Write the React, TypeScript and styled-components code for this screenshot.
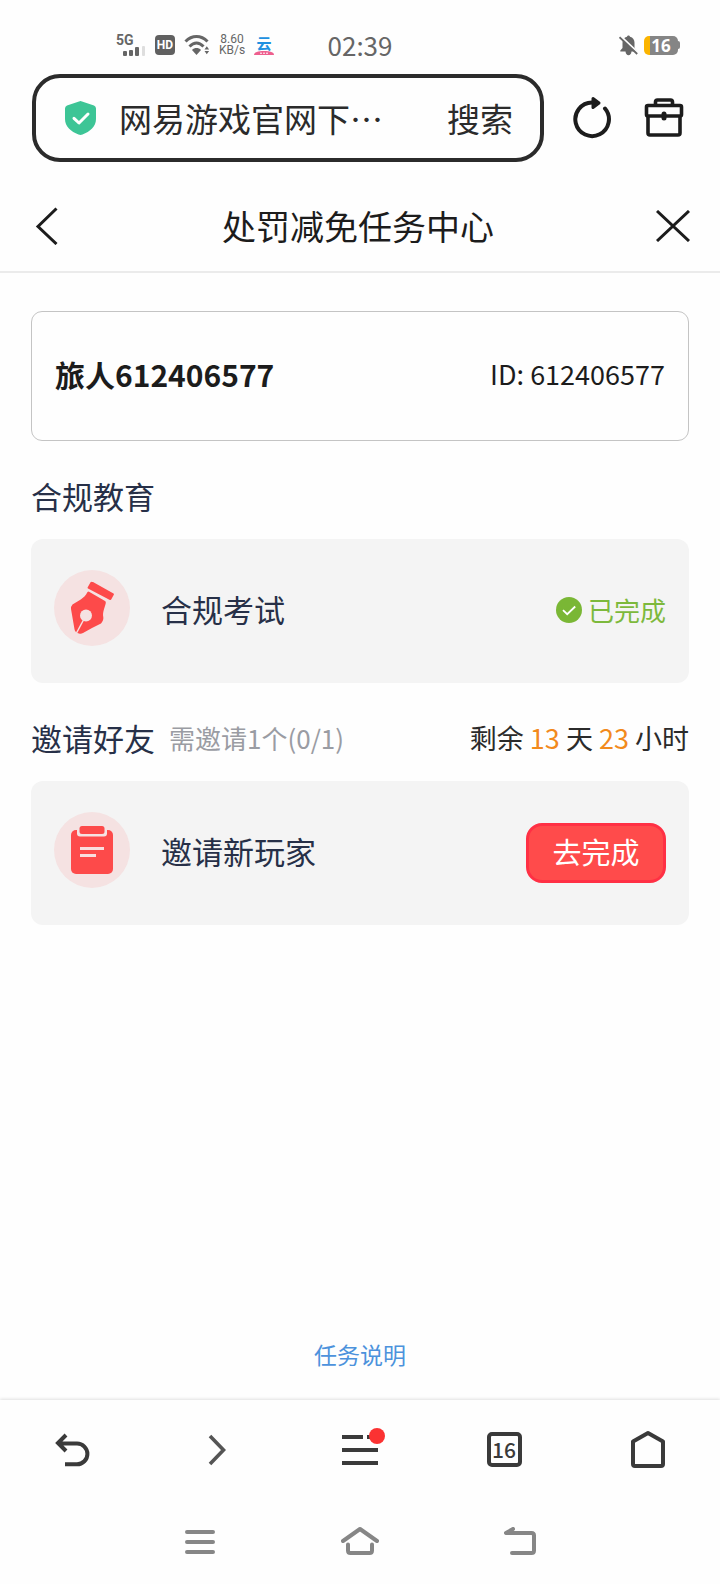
import React from "react";
import styled, { createGlobalStyle } from "styled-components";

const GlobalStyle = createGlobalStyle`
  *, *::before, *::after { box-sizing: border-box; }
  body {
    margin: 0;
    background: #fefefe;
    color: #1c1c1c;
    font-family: "Noto Sans CJK SC", "Noto Sans", sans-serif;
  }
  button, input { font-family: inherit; }
  svg { display: block; flex: none; }
`;

const Page = styled.div`
  display: flex;
  flex-direction: column;
  min-height: 100vh;
`;

/* Phone status bar */

const StatusBar = styled.div`
  display: grid;
  grid-template-columns: 1fr auto 1fr;
  align-items: center;
  height: 74px;
  padding: 16px 40px 0;
  color: #666;
`;

const StatusGroup = styled.div<{ $end?: boolean }>`
  display: flex;
  align-items: center;
  gap: ${(p) => (p.$end ? 6 : 9)}px;
  justify-content: ${(p) => (p.$end ? "flex-end" : "flex-start")};
  padding-left: ${(p) => (p.$end ? 0 : 76)}px;
`;

const Signal = styled.div`
  display: flex;
  flex-direction: column;
  width: 30px;
  height: 22px;
  font: 700 14px/12px Roboto, sans-serif;

  svg { align-self: flex-end; }
`;

const HdBadge = styled.span`
  width: 20px;
  height: 20px;
  border-radius: 4px;
  background: #606060;
  color: #fff;
  font: 700 12px/20px Roboto, sans-serif;
  text-align: center;
`;

const Speed = styled.span`
  width: 26px;
  font: 400 12px/11px Roboto, sans-serif;
  text-align: center;
`;

const CloudBadge = styled.span`
  display: flex;
  flex-direction: column;
  align-items: center;
  width: 20px;
  color: #2090e0;
  font-weight: 700;
  font-size: 15px;
  line-height: 15px;
`;

const Clock = styled.time`
  font: 400 26px/30px "Noto Sans CJK SC", sans-serif;
`;

const Battery = styled.span`
  display: flex;
  align-items: center;

  span {
    width: 34px;
    height: 19px;
    border-radius: 5px;
    background: linear-gradient(to right, #fbb400 6px, #858585 6px);
    color: #fff;
    font: 700 17px/19px "Open Sans", sans-serif;
    text-align: center;
  }

  &::after {
    content: "";
    width: 2px;
    height: 8px;
    border-radius: 0 2px 2px 0;
    background: #858585;
  }
`;

/* Browser address row */

const IconButton = styled.button`
  display: flex;
  align-items: center;
  justify-content: center;
  padding: 0;
  border: 0;
  background: none;
  color: inherit;
  cursor: pointer;
`;

const AddressRow = styled.form`
  display: flex;
  align-items: center;
  gap: 26px;
  padding: 0 36px 0 32px;
`;

const AddressBox = styled.div`
  display: flex;
  flex: 1;
  align-items: center;
  min-width: 0;
  height: 88px;
  padding: 0 27px 0 29px;
  border: 4px solid #2b2b2b;
  border-radius: 28px;
`;

const AddressInput = styled.input`
  flex: 1;
  min-width: 0;
  margin: 0 23px;
  padding: 0;
  border: 0;
  outline: 0;
  background: none;
  color: #2b2b2b;
  font-size: 33px;
  line-height: 48px;
`;

const SearchButton = styled.button`
  padding: 0;
  border: 0;
  background: none;
  color: #2b2b2b;
  font-size: 33px;
  line-height: 48px;
  cursor: pointer;
`;

const AddressActions = styled.div`
  display: flex;
  align-items: center;
  gap: 32px;
`;

/* Web page */

const TitleBar = styled.header`
  display: flex;
  align-items: center;
  justify-content: space-between;
  height: 111px;
  padding: 18px 30px 0 34px;
  border-bottom: 2px solid #ebebeb;
`;

const Title = styled.h1`
  margin: 0;
  font-weight: 400;
  font-size: 34px;
  line-height: 48px;
`;

const Content = styled.main`
  display: flex;
  flex: 1;
  flex-direction: column;
  padding: 38px 31px 26px;
`;

const PlayerCard = styled.section`
  display: flex;
  align-items: center;
  justify-content: space-between;
  height: 130px;
  padding: 0 23px 4px;
  border: 1px solid #c4c4c4;
  border-radius: 11px;
`;

const PlayerName = styled.strong`
  font-weight: 700;
  font-size: 30px;
  line-height: 40px;
`;

const PlayerId = styled.span`
  font-size: 27px;
  line-height: 40px;
`;

const SectionHead = styled.div`
  display: flex;
  align-items: center;
  height: 98px;
  padding-top: 11px;
`;

const SectionTitle = styled.h2`
  margin: 0;
  color: #273048;
  font-weight: 400;
  font-size: 31px;
  line-height: 40px;
`;

const Requirement = styled.span`
  margin-left: 14px;
  color: #9a9ca3;
  font-size: 26px;
  line-height: 40px;
`;

const Countdown = styled.span`
  margin-left: auto;
  color: #2b2b2b;
  font-size: 27px;
  line-height: 40px;

  b {
    color: #f28a1c;
    font-weight: 400;
  }
`;

const TaskCard = styled.section`
  display: flex;
  align-items: center;
  height: 144px;
  padding: 0 23px;
  border-radius: 12px;
  background: #f4f4f4;
`;

const TaskIcon = styled.span`
  align-self: flex-start;
  margin-top: 31px;
`;

const TaskName = styled.span`
  flex: 1;
  margin-left: 31px;
  padding-bottom: 4px;
  color: #273048;
  font-size: 31px;
  line-height: 40px;
`;

const Done = styled.span`
  display: flex;
  align-items: center;
  gap: 6px;
  padding-bottom: 2px;
  color: #7db93c;
  font-size: 26px;
  line-height: 40px;
`;

const GoButton = styled.button`
  width: 140px;
  height: 60px;
  padding: 0 0 4px;
  border: 3px solid #ff3044;
  border-radius: 16px;
  background: #ff4b4b;
  color: #fff;
  font-size: 29px;
  line-height: 40px;
  cursor: pointer;
`;

const HelpLink = styled.a`
  align-self: center;
  margin-top: auto;
  color: #4c92dc;
  font-size: 23px;
  line-height: 40px;
  text-decoration: none;
`;

/* Bottom bars */

const Toolbar = styled.nav`
  display: grid;
  grid-template-columns: repeat(5, 1fr);
  height: 99px;
  box-shadow: 0 -1px 3px rgba(0, 0, 0, 0.12);
  color: #3a3a3a;
`;

const MenuIcon = styled.span`
  position: relative;

  &::after {
    content: "";
    position: absolute;
    top: -4px;
    right: -7px;
    width: 16px;
    height: 16px;
    border-radius: 50%;
    background: #fb3232;
  }
`;

const TabCount = styled.span`
  width: 35px;
  height: 35px;
  border: 4px solid #3a3a3a;
  border-radius: 5px;
  font: 500 21px/26px "Noto Sans CJK SC", sans-serif;
  text-align: center;
`;

const SystemNav = styled.nav`
  position: relative;
  display: grid;
  grid-template-columns: repeat(3, 1fr);
  height: 85px;
  padding: 0 calc(100% / 6);
  background: #fefefe;
  color: #868686;
`;

const line = {
  fill: "none",
  stroke: "currentColor",
  strokeLinecap: "round" as const,
  strokeLinejoin: "round" as const,
};

export default function App() {
  return (
    <Page>
      <GlobalStyle />

      <StatusBar>
        <StatusGroup>
          <Signal>
            5G
            <svg width="24" height="10" fill="#666">
              <rect x="1" y="5" width="4" height="5" rx="1" />
              <rect x="7" y="4" width="4" height="6" rx="1" />
              <rect x="13" y="1" width="4" height="9" rx="1" />
              <rect x="20" y="0" width="3" height="10" rx="1" fill="#dedede" />
            </svg>
          </Signal>
          <HdBadge>HD</HdBadge>
          <svg width="26" height="22" viewBox="0 0 26 22" {...line} strokeWidth="3">
            <path d="M1.500 7.500C8 .8 17 .8 23.500 7.500" strokeLinecap="butt" />
            <path d="M5.500 12.500C10 8 15 8 19.500 12.500" strokeLinecap="butt" />
            <path d="M8 16c2.600-2.600 6.400-2.600 9 0L12.500 21z" fill="currentColor" stroke="none" />
            <path d="M20.500 15.500l2.300-3.200 2.300 3.200zM20.500 17h4.600L22.800 20.300z" fill="currentColor" stroke="none" />
          </svg>
          <Speed>8.60 KB/s</Speed>
          <CloudBadge>
            云
            <svg width="20" height="5" viewBox="0 0 20 5">
              <path d="M0 5C0 2 4 1 10 1S20 2 20 5z" fill="#ee5f8e" />
              <path d="M6 3.200h8" stroke="#fff" strokeWidth="1" strokeDasharray="2 1" />
            </svg>
          </CloudBadge>
        </StatusGroup>
        <Clock>02:39</Clock>
        <StatusGroup $end>
          <svg width="19" height="21" viewBox="0 0 19 21" fill="#666">
            <path d="M9.500 0.500c.9 0 1.400.6 1.500 1.300 3 .8 4.500 3 4.500 6V13l2.200 2.500v1H1.300v-1L3.500 13V7.800c0-3 1.500-5.200 4.500-6 .1-.7.600-1.300 1.500-1.300zM6.500 16.500h6c-.3 2.500-1.500 3.800-3 3.800s-2.700-1.300-3-3.800z" />
            <path d="M1.500 1L20 18.500" stroke="#fefefe" strokeWidth="2" />
            <path d="M0.500 2.200L18.200 19" stroke="#666" strokeWidth="1.800" />
          </svg>
          <Battery>
            <span>16</span>
          </Battery>
        </StatusGroup>
      </StatusBar>

      <AddressRow onSubmit={(e) => e.preventDefault()}>
        <AddressBox>
          <svg width="31" height="34" viewBox="0 0 31 34">
            <path d="M14 .4q1.500-.6 3 0L29 4.500q2 .8 2 3V18c0 7.500-6 12.500-13.500 15.600q-2 .7-4 0C6 30.500 0 25.500 0 18V7.500q0-2.200 2-3z" fill="#3dc596" />
            <path d="M9 17.300l5 4.700L23 13" fill="none" stroke="#fff" strokeWidth="3" strokeLinecap="round" strokeLinejoin="round" />
          </svg>
          <AddressInput type="text" aria-label="网址" defaultValue="网易游戏官网下…" />
          <SearchButton type="submit">搜索</SearchButton>
        </AddressBox>
        <AddressActions>
          <IconButton type="button" aria-label="刷新">
            <svg width="42" height="42" viewBox="0 0 42 42" {...line} stroke="#1c1c1c" strokeWidth="4">
              <path d="M35 11.500A16.800 16.800 0 1 1 22 5.500" />
              <path d="M23 1.500L29 6 23 10.500z" fill="#1c1c1c" strokeWidth="3" />
            </svg>
          </IconButton>
          <IconButton type="button" aria-label="工具箱">
            <svg width="40" height="42" viewBox="0 0 40 42" {...line} stroke="#1c1c1c" strokeWidth="4">
              <path d="M11.500 8V5q0-2 2-2h13q2 0 2 2v3" strokeWidth="3.600" />
              <path d="M4 8.500h32q1.500 0 1.500 1.500v7.500q0 1.500-1.500 1.500H4q-1.500 0-1.500-1.500V10Q2.500 8.500 4 8.500z" strokeWidth="3.600" />
              <path d="M4 20v16q0 2 2 2h28q2 0 2-2V20" strokeWidth="3.600" />
              <path d="M20 17v4" strokeWidth="5" />
            </svg>
          </IconButton>
        </AddressActions>
      </AddressRow>

      <TitleBar>
        <IconButton type="button" aria-label="返回">
          <svg width="26" height="38" viewBox="0 0 26 38" {...line} strokeWidth="3">
            <path d="M22.500 1.500L4 19.500l18.500 17.500" strokeLinecap="butt" strokeLinejoin="miter" />
          </svg>
        </IconButton>
        <Title>处罚减免任务中心</Title>
        <IconButton type="button" aria-label="关闭">
          <svg width="34" height="32" viewBox="0 0 34 32" {...line} strokeWidth="3">
            <path d="M1 1l32 30M33 1L1 31" strokeLinecap="butt" />
          </svg>
        </IconButton>
      </TitleBar>

      <Content>
        <PlayerCard>
          <PlayerName>旅人612406577</PlayerName>
          <PlayerId>ID: 612406577</PlayerId>
        </PlayerCard>

        <SectionHead>
          <SectionTitle>合规教育</SectionTitle>
        </SectionHead>
        <TaskCard>
          <TaskIcon>
            <svg width="76" height="76" viewBox="0 0 76 76">
              <circle cx="38" cy="38" r="38" fill="#f5e2e2" />
              <path d="M39 12l20.500 11.500q.8.500.3 1.300l-2.600 4.800q-.5.800-1.300.3L34 18.600q-.8-.5-.3-1.300l2.700-4.900q.6-.9 1.600-.4z" fill="#fd4a4a" />
              <path d="M33.500 22q1-.8 2 0L51 31q1 .6.800 2c-1 5-3.500 9-2.500 14 .3 2-.3 4.300-2.300 6.500-6 3-12 6-18 9.500q-2 1.200-4 .5-4-1-4.500-4.300L17 39q-.3-2.500 1.500-4.500C24 31 30 29 33.500 22z" fill="#fd4a4a" />
              <circle cx="32" cy="45.500" r="6" fill="#f5e2e2" />
              <path d="M30 49L22.500 63" stroke="#f5e2e2" strokeWidth="1.500" />
            </svg>
          </TaskIcon>
          <TaskName>合规考试</TaskName>
          <Done>
            <svg width="26" height="26" viewBox="0 0 26 26">
              <circle cx="13" cy="13" r="13" fill="#7ab735" />
              <path d="M7 13.200l4.200 4 8-7.700" fill="none" stroke="#fff" strokeWidth="1.800" />
            </svg>
            已完成
          </Done>
        </TaskCard>

        <SectionHead>
          <SectionTitle>邀请好友</SectionTitle>
          <Requirement>需邀请1个(0/1)</Requirement>
          <Countdown>
            剩余 <b>13</b> 天 <b>23</b> 小时
          </Countdown>
        </SectionHead>
        <TaskCard>
          <TaskIcon>
            <svg width="76" height="76" viewBox="0 0 76 76">
              <circle cx="38" cy="38" r="38" fill="#f5e2e2" />
              <rect x="17" y="18" width="42" height="44" rx="5" fill="#fd4a4a" />
              <path d="M23 17.500h30v4q0 3-3 3H26q-3 0-3-3z" fill="#f5e2e2" />
              <rect x="25.500" y="14" width="25" height="8" rx="2.500" fill="#fd4a4a" />
              <path d="M26 36.500h24M26 43.500h16" stroke="#f9dede" strokeWidth="2.800" />
            </svg>
          </TaskIcon>
          <TaskName>邀请新玩家</TaskName>
          <GoButton type="button">去完成</GoButton>
        </TaskCard>

        <HelpLink href="#help">任务说明</HelpLink>
      </Content>

      <Toolbar>
        <IconButton type="button" aria-label="后退">
          <svg width="36" height="34" viewBox="0 0 36 34" {...line} strokeWidth="4">
            <path d="M12 2L4 10l8 8M4 10.500h19a10.400 10.400 0 0 1 0 20.800H11" strokeLinecap="butt" strokeLinejoin="miter" />
          </svg>
        </IconButton>
        <IconButton type="button" aria-label="前进">
          <svg width="20" height="32" viewBox="0 0 20 32" {...line} stroke="#555" strokeWidth="3.600">
            <path d="M4 2l13.500 14L4 30" strokeLinecap="butt" strokeLinejoin="miter" />
          </svg>
        </IconButton>
        <IconButton type="button" aria-label="菜单">
          <MenuIcon>
            <svg width="36" height="36" viewBox="0 0 36 36" {...line} strokeWidth="4">
              <path d="M0 5h21M25 5h11M0 18h36M0 31h36" strokeLinecap="butt" />
            </svg>
          </MenuIcon>
        </IconButton>
        <IconButton type="button" aria-label="标签页">
          <TabCount>16</TabCount>
        </IconButton>
        <IconButton type="button" aria-label="主页">
          <svg width="36" height="40" viewBox="0 0 36 40" {...line} strokeWidth="4">
            <path d="M18 3L33 11.500V34q0 2-2 2H5q-2 0-2-2V11.500z" />
          </svg>
        </IconButton>
      </Toolbar>

      <SystemNav>
        <IconButton type="button" aria-label="最近任务">
          <svg width="30" height="26" viewBox="0 0 30 26" {...line} strokeWidth="4">
            <path d="M2 3h26M2 13h26M2 23h26" />
          </svg>
        </IconButton>
        <IconButton type="button" aria-label="主屏幕">
          <svg width="38" height="32" viewBox="0 0 38 32" {...line} strokeWidth="4">
            <path d="M2 15L19 3l17 12M7 18.500v6q0 2.500 2.500 2.500h19Q31 27 31 24.500v-6" />
          </svg>
        </IconButton>
        <IconButton type="button" aria-label="系统返回">
          <svg width="32" height="30" viewBox="0 0 32 30" {...line} strokeWidth="4">
            <path d="M9 2L2 6h25.500Q30 6 30 8.500v15q0 2.500-2.500 2.500H8" />
          </svg>
        </IconButton>
      </SystemNav>
    </Page>
  );
}
